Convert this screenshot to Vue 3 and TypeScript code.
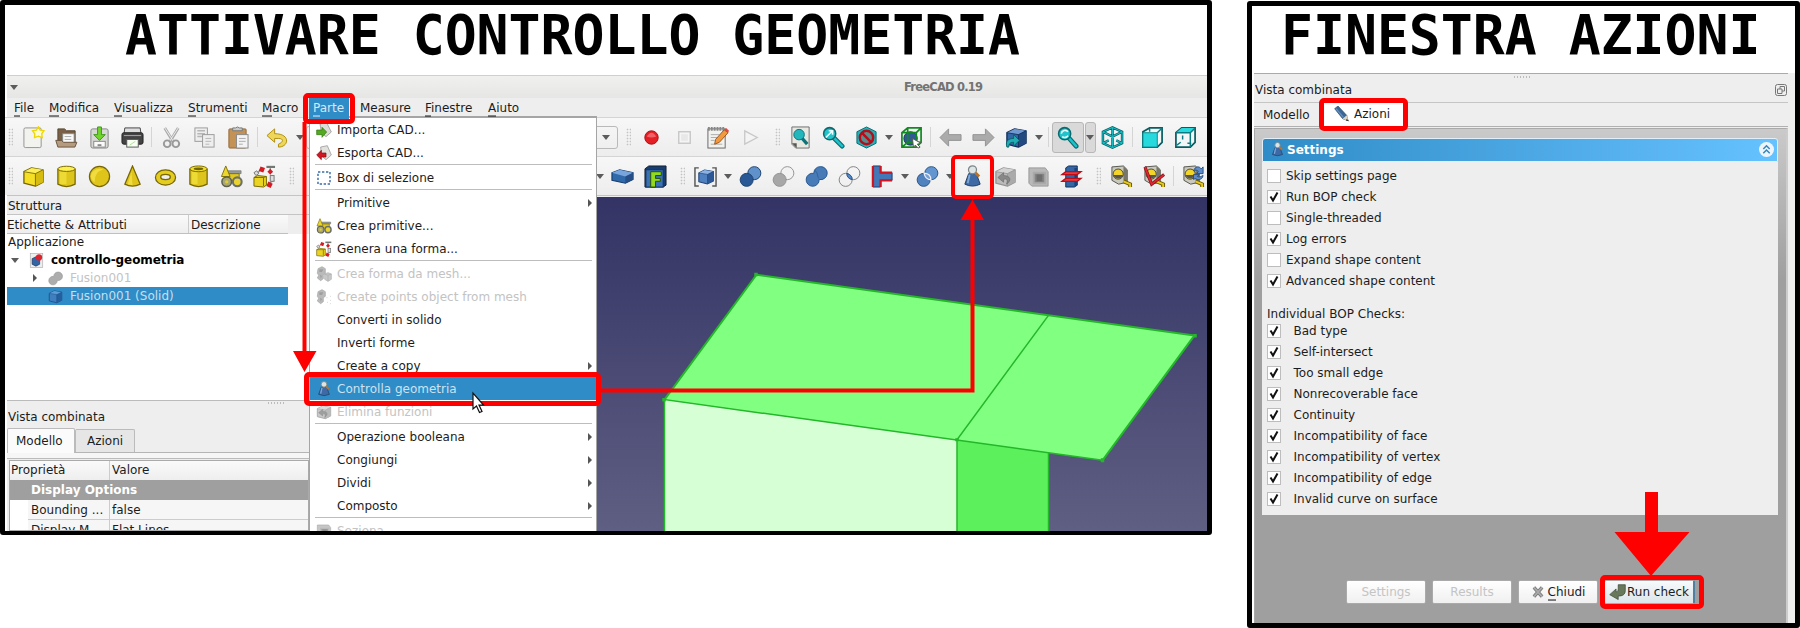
<script setup lang="ts">
type Tool = { k: string; i?: string }

const cube = (a: string, b: string, c: string, s: string) =>
  `<path d="M2 7 10 3 22 5v13l-8 4L2 19Z" fill="${a}" stroke="${s}" stroke-width="1.4" stroke-linejoin="round"/><path d="M2 7 10 3 22 5 14 9Z" fill="${b}"/><path d="M14 9 22 5v13l-8 4Z" fill="${c}"/><path d="M2 7 14 9 22 5M14 9v13" fill="none" stroke="${s}" stroke-width=".9"/>`
const spheres = (a: string, b: string, s: string) =>
  `<circle cx="16" cy="8.5" r="6.8" fill="${b}" stroke="${s}"/><circle cx="8" cy="15.5" r="6.8" fill="${a}" stroke="${s}"/>`
const lens = (x: number, y: number) =>
  `<path d="M${x + 4} ${y + 4} 21 21" stroke="#0b6a70" stroke-width="5" stroke-linecap="round"/><path d="M${x + 4} ${y + 4} 21 21" stroke="#18c4cb" stroke-width="2.6" stroke-linecap="round"/><circle cx="${x}" cy="${y}" r="6.3" fill="#22c3ca" stroke="#0b6a70" stroke-width="1.6"/>`
const tape = `<path d="M2 2 14 1l4 4v13l-9 2-7-4Z" fill="#c9c9bd" stroke="#55554d"/><path d="m14 1 4 4v13l-4-2Z" fill="#77776b"/><circle cx="8.500" cy="9.500" r="5.300" fill="#f3d52a" stroke="#444"/><path d="M3.500 10.500a5.300 5.300 0 0 0 10 0Z" fill="#555"/><path d="m14 17 7 3v3" fill="none" stroke="#6f5d00" stroke-width="4"/><path d="m14 17 7 3v3" fill="none" stroke="#e5cb20" stroke-width="2"/>`
const pawn = `<path d="M8 9h8l4 11q-8 4-16 0Z" fill="#3d6aa5" stroke="#1d3c67"/><path d="m9 10-2 9" stroke="#7ea5d6" stroke-width="2"/><path d="m15 8 4 4" stroke="#b8742b" stroke-width="3"/><circle cx="12" cy="5" r="4.2" fill="#dce4e4" stroke="#7d8588" stroke-width="1.3"/>`
const blob = `<path d="M16 1.7a6.8 6.8 0 1 1-1.2 13.4 6.8 6.8 0 1 1-5.6-6.4A6.8 6.8 0 0 1 16 1.7Z" `
const prims = `<path d="M8 6h14v3H8" fill="#969b96" stroke="#6d716d" stroke-width=".7"/><path d="M8 9h12v8H5z" fill="#dfc727" stroke="#827100"/><path d="M6 1 10.500 12h-9Z" fill="#ecd62d" stroke="#827100"/><circle cx="7" cy="17.500" r="5" fill="#aaa774" stroke="#5d604f" stroke-width="1.600"/><circle cx="7" cy="17.500" r="1.700" fill="#ded12f"/><circle cx="18" cy="17.500" r="4.600" fill="#e8d331" stroke="#6c7068" stroke-width="2.200"/>`
const builder = `<path d="m1 13 4-2 9 1v9l-3 2-10-1Z" fill="#ead321" stroke="#766700"/><path d="M1 13h10v9m0-9 3-1" fill="none" stroke="#766700"/><path d="M14 2h9" stroke="#737773" stroke-width="2.3"/><path d="M18 3v7M4 10l4-6m9 15 5-3" stroke="#888" stroke-width="1.3"/><rect x="7" y="2" width="5" height="5" fill="#d51a22" transform="rotate(20 9 4)"/><path d="m18 4 3 3-3 3-3-3Z" fill="#d51a22"/><rect x="18" y="11" width="4" height="6" fill="#ddd" stroke="#777"/><path d="m1 8 3-2 2 3-3 2Z" fill="#ddd" stroke="#777"/><rect x="15" y="18" width="5" height="5" fill="#d51a22" transform="rotate(25 17 20)"/>`

const icons: Record<string, string> = {
  new: `<rect x="2" y="2" width="18" height="20.500" rx="1.500" fill="#f2f2ee" stroke="#929292"/><path d="m17 1 2 3.300 4 .6-2.400 3.200.5 4-4-1.500-4 1.500.2-4L11 5l4-.7Z" fill="#fffbd0" stroke="#efd600" stroke-width="1.400"/>`,
  open: `<path d="M3 3h7l2 2h9v14H3Z" fill="#7a6047" stroke="#574330"/><path d="M8 8h12v10H8Z" fill="#fafafa" stroke="#888"/><path d="M10 11h7m-7 3h7" stroke="#aaa"/><path d="M.8 15h6l2 2h14l-2 5H3Z" fill="#b49c80" stroke="#6b543d"/>`,
  save: `<rect x="3" y="3" width="18" height="20" rx="2" fill="#d6d8d4" stroke="#858585"/><rect x="6" y="16" width="12" height="6" fill="#fafafa" stroke="#888"/><path d="M10 20h4" stroke="#888" stroke-width="2"/><path d="M10 1h4v8h4l-6 6-6-6h4Z" fill="#71d62b" stroke="#3a9611"/>`,
  print: `<path d="M4 2h16l1 7H3Z" fill="#dedede" stroke="#444"/><rect x="1" y="7" width="22" height="12" rx="2" fill="#444" stroke="#222"/><path d="M3 10h18" stroke="#aaa"/><rect x="6" y="14" width="12" height="8" fill="#f7fff2" stroke="#555"/><path d="m9 20 6-4" stroke="#a9df95"/>`,
  cut: `<path d="m5 2 9 15M19 2l-9 15" stroke="#aaa" stroke-width="3"/><path d="m5 2 9 14M19 2l-9 14" stroke="#eee"/><circle cx="7.500" cy="18.500" r="3.500" fill="none" stroke="#999" stroke-width="2"/><circle cx="16.500" cy="18.500" r="3.500" fill="none" stroke="#999" stroke-width="2"/>`,
  copy: `<rect x="2" y="2" width="13" height="14" fill="#eee" stroke="#9a9a9a"/><path d="M4.500 5h8m-8 3h8m-8 3h5" stroke="#b6b6b6" stroke-width="1.500"/><rect x="10" y="9" width="12" height="13" fill="#eee" stroke="#9a9a9a"/><path d="M13 13h6m-6 3h6m-6 3h4" stroke="#b6b6b6"/>`,
  paste: `<rect x="3" y="3" width="18" height="20" rx="1" fill="#c49254" stroke="#926935"/><path d="M7 5V2h3l2-1 2 1h3v3Z" fill="#c8cac8" stroke="#777"/><rect x="11" y="9" width="12" height="14" fill="#f3f3f3" stroke="#888"/><path d="M13.500 13h7m-7 3h7m-7 3h4" stroke="#aaa"/>`,
  undo: `<path d="m9 3-8 7 8 7v-4h4c6 0 5 4 0 6v3c11 0 13-14-4-14Z" fill="#eed65b" stroke="#ad8c09"/>`,
  box: cube('#f4df25', '#faed58', '#d6bc0e', '#776600'),
  cyl: `<path d="M3 4v16q9 5 18 0V4" fill="#dec51d" stroke="#776600" stroke-width="1.300"/><path d="M5 7h7v13H5Z" fill="#eeda34"/><ellipse cx="12" cy="4" rx="9" ry="2.700" fill="#fff052" stroke="#776600"/>`,
  sphere: `<circle cx="12" cy="12" r="10.500" fill="#dfc41a" stroke="#776600" stroke-width="1.300"/><path d="M3 12c0-7 9-10 13-7-7 1-9 7-9 13-2-1-4-3-4-6Z" fill="#f0dc40"/>`,
  cone: `<path d="M12 1 20 20q-8 4-16 0Z" fill="#dfc41a" stroke="#776600" stroke-width="1.300"/><path d="m11 7-4 13 5 1Z" fill="#f0dc40"/>`,
  torus: `<ellipse cx="12" cy="13" rx="10.500" ry="8" fill="#e5cd20" stroke="#776600" stroke-width="1.300"/><ellipse cx="12" cy="12.500" rx="5" ry="2.700" fill="#eee" stroke="#776600" stroke-width="1.400"/>`,
  tube: `<path d="M3 4v16q9 5 18 0V4" fill="#dec51d" stroke="#776600" stroke-width="1.300"/><path d="M5 7h6v13H5Z" fill="#eeda34"/><ellipse cx="12" cy="4" rx="9" ry="3" fill="#f4df25" stroke="#776600"/><ellipse cx="12" cy="4" rx="5" ry="1.500" fill="#716500"/>`,
  prims,
  builder,
  rec: `<circle cx="12" cy="12" r="7" fill="#e31e24" stroke="#b00d13"/><path d="M7 11q5-8 10 0-5 2-10 0" fill="#f06165"/>`,
  stop: `<rect x="6" y="6" width="12" height="12" fill="#f5f5f5" stroke="#c8c8c8" stroke-width="1.500"/><rect x="8.500" y="8.500" width="7" height="7" fill="#e8e8e8"/>`,
  edit: `<rect x="2" y="3" width="18" height="20" fill="#f1f1ed" stroke="#666"/><path d="M2 3h18" stroke="#888" stroke-width="4" stroke-dasharray="2 1"/><path d="M5 9h9m-9 3h7m-7 3h4m-4 4h12" stroke="#aaa"/><path d="m10 14 9-10 4 3-9 10-5 2Z" fill="#f39a3d" stroke="#995420"/><path d="m19 4 2-2 3 3-1 2Z" fill="#e04646"/>`,
  play: `<path d="M6 5 19 12 6 19Z" fill="#f4f4f4" stroke="#c8c8c8" stroke-width="1.400"/>`,
  fit: `<path d="M3 1h18v22H7l-4-4Z" fill="#e8e8e3" stroke="#6c6c6c"/><path d="M3 18h5v5Z" fill="#555"/><path d="m13 12 6 7" stroke="#0d7379" stroke-width="3.500"/><circle cx="10.500" cy="9" r="5.500" fill="#21b7bd" stroke="#0b7378"/>`,
  zoom: lens(8, 8) + `<path d="m4 12 7-7M7 5h4v4" fill="none" stroke="#e9ffff" stroke-width="1.700"/>`,
  nodraw: `<path d="M12 1 22 6v12l-10 5L2 18V6Z" fill="#1fb4bb" stroke="#0b6a70"/><circle cx="12" cy="12" r="7" fill="#5a8d90" stroke="#b70d18" stroke-width="2.600"/><path d="m7 7 10 10" stroke="#b70d18" stroke-width="2.600"/>`,
  bbox: `<circle cx="11" cy="13" r="7" fill="#315b94" stroke="#18345e"/><path d="M2 7 8 2h14v15l-5 5H2ZM2 7h15v15M17 7l5-5M8 2v15l-6 5M8 17h14" fill="none" stroke="#128a22" stroke-width="1.800"/><path d="m13 13 9 5-4 1 3 3-2 1-3-3-2 2Z" fill="#fff" stroke="#555"/>`,
  left: `<path d="M1 12 10 3v6h13v6H10v6Z" fill="#ababab" stroke="#929292"/>`,
  right: `<path d="M23 12 14 3v6H1v6h13v6Z" fill="#ababab" stroke="#929292"/>`,
  link: cube('#3465a4', '#7099d2', '#234981', '#122f59') + `<path d="M2 22C0 15 4 13 9 13V9l6 6-6 6v-4c-4 0-5 2-5 5Z" fill="#22acb4" stroke="#076269"/>`,
  sync: lens(9, 8) + `<path d="M5.500 8a4 4 0 0 1 7-2m0 4a4 4 0 0 1-6 1" fill="none" stroke="#e9ffff" stroke-width="1.700"/>`,
  iso: `<path d="M12 1.500 22 6v12l-10 4.500L2 18V6Zm0 0V10M2 6l10 5 10-5M12 11v11M2 18l6-3m14 3-6-3" fill="none" stroke="#075d63" stroke-width="2.600"/><path d="M12 1.500 22 6v12l-10 4.500L2 18V6Zm0 0V10M2 6l10 5 10-5M12 11v11M2 18l6-3m14 3-6-3" fill="none" stroke="#19b9c1" stroke-width="1.200"/>`,
  front: `<path d="M2 6 9 2h13v15l-5 5H2Z" fill="#f2f6f6" stroke="#075d63" stroke-width="1.800"/><path d="M2 7h15v15H2Z" fill="#27d8dd" stroke="#0a888c"/><path d="m17 7 5-5M9 3v3" stroke="#0a7b80" stroke-width="1.500"/>`,
  top: `<path d="M2 7 8 2h14v15l-5 5H2Z" fill="#f2f6f6" stroke="#075d63" stroke-width="1.800"/><path d="m2 7 6-5h14l-5 5Z" fill="#27d8dd"/><path d="M2 7h15v15M17 7l5-5M9 10v4m-6 6 4-3m7 1h4" fill="none" stroke="#0a7b80" stroke-width="1.500"/>`,
  extr: `<path d="M1 8 9 5l14 3v7l-8 4-14-3Z" fill="#316aaa" stroke="#163d6d" stroke-width="1.200"/><path d="m1 8 8-3 14 3-8 4Z" fill="#78a6dc"/><path d="m15 12 8-4v7l-8 4Z" fill="#264f87"/>`,
  f: `<path d="M1 4 5 1h18v20l-3 2H1Z" fill="#183d70" stroke="#14202e"/><rect x="2" y="5" width="18" height="18" fill="#3a72b5" stroke="#13325c"/><path d="M7 7h11v4h-6v3h5v3h-5v6H7Z" fill="#91da1e" stroke="#254c08"/>`,
  comp: `<path d="M5 3H1v19h4M19 3h4v19h-4" fill="none" stroke="#555" stroke-width="1.500"/><g transform="translate(3.500 3) scale(.76)">${cube('#4f80bf', '#8cb1e2', '#2d5898', '#1d4378')}</g>`,
  bool: spheres('#285896', '#5f91ca', '#1d426f'),
  minus: spheres('#a7a7a7', '#f2f2f2', '#929292'),
  fuse: blob + `fill="#477bb8" stroke="#24568f"/><path d="M10 5q3 2 4 9" fill="none" stroke="#315f99"/>`,
  inter: spheres('none', 'none', '#818181') + `<path d="M9.200 8.700q5.500 1.500 5.600 6.500-5.500-1-5.600-6.500Z" fill="#548ac7" stroke="#245393"/>`,
  join: `<path d="M2 1h8v7h12v8H10v7H2Z" fill="#4277b8" stroke="#193c6a"/><path d="M2 1v22m8-22v7h12M10 23v-7h12" fill="none" stroke="#d01420" stroke-width="2.400"/>`,
  split: spheres('#4f82bf', '#6396d0', '#285582') + `<path d="M8.500 8.500q7 .5 7 7-6-.5-7-7Z" fill="#759fcd" stroke="#eef" stroke-width="1.300"/>`,
  pawn,
  defeat: cube('#bcbcbc', '#d3d3d3', '#aaa', '#969696') + `<path d="m4 13 6-5v3c7 0 9 5 3 9 2-5 0-6-3-5v3Z" fill="#888" stroke="#666" stroke-width=".6"/>`,
  shell: `<path d="M2 3h17l3 4v15H5l-3-3Z" fill="#b9b9b9" stroke="#999"/><path d="M7 8h12v11H7Z" fill="#858585" stroke="#aaa" stroke-width="2"/><path d="M10 10h6v7h-6Z" fill="#6e6e6e"/>`,
  section: `<path d="m6 3 3-2h9v20l-3 2H6Z" fill="#3465a4" stroke="#122f59"/><path d="M15 3h3v18l-3 2Z" fill="#1c427a"/><path d="M2 10 6 7h16l-4 3ZM2 17l4-3h16l-4 3Z" fill="#e23a3f" stroke="#bd0e18" stroke-width="1.300"/>`,
  tape,
  angle: tape + `<path d="m2 2 7 18L22 10" fill="none" stroke="#8c1018" stroke-width="3.200"/><path d="m2 2 7 18L22 10" fill="none" stroke="#df2631" stroke-width="1.800"/>`,
  refresh: tape + `<path d="M12 6c2-5 6-5 8-2l2-2v7h-7l2-2c-1-2-3-2-5-1Zm10 5c-1 5-6 5-8 3l-2 1v-5h6l-2 2c2 1 4 0 6-1Z" fill="#5c8cc9" stroke="#294f83"/>`,
  imp: `<path d="M6 3 16 1l7 14-8 7-7-6Z" fill="#dcdcd8" stroke="#888"/><path d="M1 12h8V8l7 7-7 8v-4H1Z" fill="#54a822" stroke="#2d720e"/>`,
  exp: `<path d="M7 3 17 1l6 14-8 7-7-6Z" fill="#e1e1dd" stroke="#888"/><path d="M15 12H8V8l-7 7 7 7v-4h7Z" fill="#cf1822" stroke="#8b0710"/>`,
  sel: `<rect x="3" y="3" width="18" height="18" fill="none" stroke="#3a6da8" stroke-width="2.200" stroke-dasharray="3.500 2.500"/>`,
  mesh: `<path d="M3 4 9 1l5 3v7l-3 2v6l-4 3-5-4 2-4-2-3Z" fill="#aaa" stroke="#909090"/><path d="M5 5h6l-2 4H5Zm1 8 3 2-2 4" fill="#888"/><path d="m13 12 5-2 5 2v8l-5 3-5-3Z" fill="#bcbcbc" stroke="#999"/><path d="m13 12 5 2 5-2m-5 2v9" fill="none" stroke="#999"/>`,
  points: `<path d="M3 4 9 1l5 3v7l-3 2v6l-4 3-5-4 2-4-2-3Z" fill="#aaa" stroke="#909090"/><path d="M5 5h6l-2 4H5Zm1 8 3 2-2 4" fill="#888"/><path d="M16 13h1m4-2h1m-1 6h1m-5 3h1m3 2h1" stroke="#bbb" stroke-width="1.500"/>`,
  doc: `<rect x="2" y="1" width="20" height="22" fill="#eee" stroke="#aaa"/><path d="M5 9 11 6l6 3v9l-6 3-6-3Z" fill="#3465a4" stroke="#152f55"/><circle cx="16" cy="7" r="5" fill="#dc242c"/>`,
  greyfuse: blob + `fill="#adadad" stroke="#999"/>`,
  solid: cube('#3f7fc0', '#5b9bd8', '#245f9f', '#1d5188'),
  pencil: `<path d="m1 4 5-4 13 14 2 8-8-3Z" fill="#3b6796" stroke="#29496e"/><path d="m3 4 11 13" stroke="#6990bb" stroke-width="2"/><path d="m13 19 6-5 3 9Z" fill="#ddd6c4"/><path d="m19 19 4 4-5-1Z" fill="#333"/>`,
  x: `<path d="m5 4 14 16M19 4 5 20" stroke="#777" stroke-width="6"/><path d="m5 4 14 16M19 4 5 20" stroke="#aaa" stroke-width="3"/>`,
  enter: `<path d="M13 1h10v8c0 6-4 8-10 8v5L1 15l9-8v4c2 0 3-1 3-4Z" fill="#68785a" stroke="#3c4936"/>`,
}

const parse = (s: string): Tool[] =>
  s.split(' ').map((t) => (icons[t] ? { k: 'icon', i: t } : { k: t }))

const bar1 = parse('handle new open save print sep cut copy paste sep undo arrow combo handle rec stop edit play handle fit zoom nodraw arrow bbox sep left right link arrow sep pressed iso sep front top')
const bar2 = parse('handle box cyl sphere cone torus tube prims builder handle gap arrow extr f handle comp arrow bool minus fuse inter join arrow split arrow pawn defeat shell section handle tape angle sep refresh')

const menubar = [
  { t: 'File', w: 35 }, { t: 'Modifica', w: 65 }, { t: 'Visualizza', w: 74 }, { t: 'Strumenti', w: 74 },
  { t: 'Macro', w: 52 }, { t: 'Parte', w: 46 }, { t: 'Measure', w: 65, plain: true }, { t: 'Finestre', w: 63 }, { t: 'Aiuto', w: 50 },
]

type Item = { t?: string; i?: string; sub?: boolean; off?: boolean; on?: boolean }
const menu: Item[] = [
  { t: 'Importa CAD...', i: 'imp' }, { t: 'Esporta CAD...', i: 'exp' }, {},
  { t: 'Box di selezione', i: 'sel' }, {},
  { t: 'Primitive', sub: true }, { t: 'Crea primitive...', i: 'prims' }, { t: 'Genera una forma...', i: 'builder' }, {},
  { t: 'Crea forma da mesh...', i: 'mesh', off: true }, { t: 'Create points object from mesh', i: 'points', off: true },
  { t: 'Converti in solido' }, { t: 'Inverti forme' }, { t: 'Create a copy', sub: true },
  { t: 'Controlla geometria', i: 'pawn', on: true }, { t: 'Elimina funzioni', i: 'defeat', off: true }, {},
  { t: 'Operazione booleana', sub: true }, { t: 'Congiungi', sub: true }, { t: 'Dividi', sub: true }, { t: 'Composto', sub: true }, {},
  { t: 'Seziona', i: 'shell', off: true },
]

const options = [
  { t: 'Skip settings page', c: false }, { t: 'Run BOP check', c: true }, { t: 'Single-threaded', c: false },
  { t: 'Log errors', c: true }, { t: 'Expand shape content', c: false }, { t: 'Advanced shape content', c: true },
]
const checks = ['Bad type', 'Self-intersect', 'Too small edge', 'Nonrecoverable face', 'Continuity', 'Incompatibility of face', 'Incompatibility of vertex', 'Incompatibility of edge', 'Invalid curve on surface']
</script>

<template>
  <main class="page">
    <section class="panel main">
      <h1><span>ATTIVARE CONTROLLO GEOMETRIA</span></h1>
      <div class="window">
        <div class="titlebar"><i class="tri down" /><b>FreeCAD 0.19</b></div>
        <nav class="menubar">
          <span v-for="m in menubar" :key="m.t" :class="{ active: m.t === 'Parte' }" :style="{ width: m.w + 'px' }">
            <em><u v-if="!m.plain">{{ m.t[0] }}</u>{{ m.plain ? m.t : m.t.slice(1) }}</em>
          </span>
        </nav>
        <div v-for="(bar, n) in [bar1, bar2]" :key="n" class="toolbar">
          <template v-for="(b, j) in bar" :key="j">
            <span v-if="b.k === 'pressed'" class="split"><span><svg viewBox="0 0 24 24" v-html="icons.sync" /></span><span><i class="tri down" /></span></span>
            <span v-else :class="b.k">
              <svg v-if="b.i" viewBox="0 0 24 24" v-html="icons[b.i]" />
              <i v-else-if="b.k === 'arrow' || b.k === 'combo'" class="tri down" />
            </span>
          </template>
        </div>
        <div class="body">
          <aside>
            <div class="docktitle"><em>Struttura</em></div>
            <div class="treehead"><span><em>Etichette &amp; Attributi</em></span><span><em>Descrizione</em></span></div>
            <div class="tree">
              <div class="app"><em>Applicazione</em></div>
              <div class="node"><i class="tri down" /><svg viewBox="0 0 24 24" v-html="icons.doc" /><b>controllo-geometria</b></div>
              <div class="node child dim"><i class="tri next" /><svg viewBox="0 0 24 24" v-html="icons.greyfuse" /><em>Fusion001</em></div>
              <div class="node child chosen"><i class="tri none" /><svg viewBox="0 0 24 24" v-html="icons.solid" /><em>Fusion001 (Solid)</em></div>
            </div>
            <div class="combi"><i class="grip" /><em>Vista combinata</em></div>
            <div class="tabs"><span class="cur"><em>Modello</em></span><span><em>Azioni</em></span></div>
            <div class="splitrow"><i class="grip" /></div>
            <div class="props">
              <div class="ph"><span><em>Proprietà</em></span><span><em>Valore</em></span></div>
              <div class="pg"><b>Display Options</b></div>
              <div class="pr"><i /><span><em>Bounding ...</em></span><span><em>false</em></span></div>
              <div class="pr"><i /><span><em>Display M...</em></span><span><em>Flat Lines</em></span></div>
            </div>
          </aside>
          <svg class="view" viewBox="309 197 898 334" preserveAspectRatio="none">
            <defs><linearGradient id="sky" x1="0" y1="0" x2="0" y2="1"><stop offset="0" stop-color="#333365" /><stop offset="1" stop-color="#5f5f83" /></linearGradient></defs>
            <rect x="309" y="197" width="898" height="334" fill="url(#sky)" />
            <path d="M664 399 957 439V532H664Z" fill="#d6ffd6" />
            <path d="M957 439 1048.500 452V532H957Z" fill="#5cf15c" />
            <path d="M756.500 274.500 1194.500 335 1102.500 459.500 664.500 399Z" fill="#80ff80" />
            <g fill="none" stroke="#24b72a" stroke-width="1.500"><path d="M664.500 532V399L1102.500 459.500M1048.500 452V532M957 532V439L1048.500 315" /><path d="M664.500 399 756.500 274.500 1194.500 335 1102.500 459.500" stroke-width="2" /></g>
            <path d="M756 272.500v3.500M664 397.500v3.500M1195 333.500v3.500M1102.500 457.500v4M957 437.500v3" stroke="#24b72a" stroke-width="3.500" />
          </svg>
        </div>
      </div>
      <div class="popup">
        <template v-for="(m, j) in menu" :key="j">
          <hr v-if="!m.t" />
          <div v-else class="item" :class="{ off: m.off, on: m.on }">
            <span class="ic"><svg v-if="m.i" viewBox="0 0 24 24" v-html="icons[m.i]" /></span><em>{{ m.t }}</em><i v-if="m.sub" class="tri next" />
          </div>
        </template>
      </div>
      <div class="frame parte" /><div class="frame controlla" /><div class="frame tool" />
      <svg class="marks" viewBox="0 0 1212 535">
        <path d="M304.500 122V354M600 390.500H972.500V218" fill="none" stroke="red" stroke-width="4" />
        <path d="M293 351h23.500L304.500 372ZM960.500 220h23.500L972.500 199.500Z" fill="red" />
        <path d="M473 393v16l3.500-3 3 6.500 2.500-1-3-6.500h4.500Z" fill="#fff" stroke="#111" stroke-width="1.200" />
      </svg>
    </section>

    <section class="panel actions">
      <h1><span>FINESTRA AZIONI</span></h1>
      <div class="dock">
        <div class="dtop"><i class="grip" /><em>Vista combinata</em>
          <svg viewBox="0 0 12 12"><rect x=".5" y=".5" width="11" height="11" rx="2" fill="none" stroke="#777" /><path d="M5 5V2.500h4.500V7H7M2.500 5H7v4.500H2.500Z" fill="none" stroke="#777" /></svg>
        </div>
        <div class="dtabs"><span><em>Modello</em></span><span class="cur"><svg viewBox="0 0 24 24" v-html="icons.pencil" /><em>Azioni</em></span></div>
        <div class="task">
          <div class="thead"><svg viewBox="0 0 24 24" v-html="icons.pawn" /><b>Settings</b>
            <svg class="fold" viewBox="0 0 14 14"><circle cx="7" cy="7" r="7" fill="#eef5fa" /><path d="m4 6.500 3-3 3 3m-6 4 3-3 3 3" fill="none" stroke="#3486bd" stroke-width="1.400" /></svg>
          </div>
          <div class="tbody">
            <div v-for="o in options" :key="o.t" class="row"><i class="cb"><svg v-if="o.c" viewBox="0 0 14 14"><path d="m3.500 6.500 2.500 4 4.500-8" /></svg></i><em>{{ o.t }}</em></div>
            <div class="label"><em>Individual BOP Checks:</em></div>
            <div v-for="c in checks" :key="c" class="row far"><i class="cb"><svg viewBox="0 0 14 14"><path d="m3.500 6.500 2.500 4 4.500-8" /></svg></i><em>{{ c }}</em></div>
          </div>
          <div class="buttons">
            <button class="off"><em>Settings</em></button><button class="off"><em>Results</em></button>
            <button><svg viewBox="0 0 24 24" v-html="icons.x" /><em><u>C</u>hiudi</em></button>
            <button class="run"><svg viewBox="0 0 24 24" v-html="icons.enter" /><em>Run check</em></button>
          </div>
        </div>
      </div>
      <div class="frame azioni" /><div class="frame check" />
      <svg class="marks" viewBox="0 0 553 627"><path d="M398 491h13v40h31.500L404 575 367.500 531H398Z" fill="red" /></svg>
    </section>
  </main>
</template>

<style>
html, body { margin: 0; background: #fff; overflow: hidden; }
</style>

<style scoped>
* { box-sizing: border-box; }
.page { display: flex; align-items: flex-start; gap: 35px; width: 1800px; height: 628px; font: 12px/14px "DejaVu Sans", sans-serif; color: #1c1c1c; background: #fff; }
em, b { font-style: normal; display: inline-block; white-space: pre; transform: scaleY(1.07); }
u { text-decoration: none; border-bottom: 1px solid currentColor; }
svg { display: block; flex: none; }
.panel { position: relative; flex: none; border: 5px solid #000; border-radius: 3px; background: #fff; overflow: hidden; }
.main { width: 1212px; height: 535px; border-bottom-width: 4px; padding-left: 2px; }
.actions { width: 553px; height: 627px; margin-top: 1px; padding-left: 2px; }
h1 { margin: 0; height: 70px; font: bold 53.1px/61px "DejaVu Sans Mono", monospace; color: #000; white-space: pre; }
h1 span { display: inline-block; transform: scaleY(1.035); transform-origin: 0 50%; }
.main h1 { padding-left: 118px; }
.actions h1 { height: 67px; padding-left: 27px; line-height: 59px; }
.window { height: 456px; background: #eee; display: flex; flex-direction: column; }
.tri { width: 0; height: 0; flex: none; }
.tri.down { border: 4px solid transparent; border-top: 5px solid #5c5c5c; border-bottom: 0; }
.tri.next { border: 4px solid transparent; border-left: 4px solid #555; border-right: 0; }
.titlebar { flex: none; height: 23px; display: flex; align-items: center; border-top: 1px solid #cfcfcf; background: linear-gradient(#f0f0ef, #e6e6e4); padding-left: 3px; }
.titlebar b { margin-left: 886px; color: #737373; font-size: 11.500px; letter-spacing: -.78px; }
.menubar { flex: none; height: 19px; display: flex; padding-left: 2px; background: #eee; }
.menubar span { flex: none; height: 21px; padding: 3px 0 0 5px; position: relative; z-index: 1; }
.menubar .active { background: linear-gradient(#308cc6, #308cc6) 0 0 / 40px 100% no-repeat; color: #d5e8f5; padding-left: 4px; }
.toolbar { flex: none; height: 39px; display: flex; border-top: 1px solid #d4d4d4; background: linear-gradient(#f7f7f7, #ededed); margin-left: -7px; padding-left: 7px; overflow: hidden; }
.toolbar > span { flex: none; display: flex; align-items: center; justify-content: center; }
.toolbar > .icon { width: 33px; }
.toolbar svg { width: 23px; height: 23px; }
.toolbar > .sep { width: 6.500px; }
.sep::before { content: ""; width: 1px; height: 20px; background: #d5d5d5; }
.toolbar > .arrow { width: 12px; }
.handle { width: 17px; padding-left: 5px; }
.toolbar > .handle:first-child { margin-left: -8px; width: 17.500px; }
.handle::before { content: ""; width: 5px; height: 18px; background: radial-gradient(circle, #c4c4c4 40%, transparent 50%) 0 0 / 3px 3px; }
.toolbar > .combo { width: 312px; padding-right: 7px; justify-content: flex-end; height: 23px; margin-top: 8px; border: 1px solid #b9b9b9; border-radius: 3px; }
.toolbar > .gap { width: 296px; }
.toolbar > .split { width: 44.500px; gap: 1px; justify-content: flex-start; }
.split > span { height: 31px; width: 32px; display: flex; align-items: center; justify-content: center; background: #d9d9d9; border: 1px solid #b7b7b7; border-radius: 3px; }
.split > span + span { width: 11px; }
.body { flex: 1; display: flex; min-height: 0; border-top: 1px solid #c4c4c4; }
aside { width: 302px; flex: none; display: flex; flex-direction: column; }
.view { width: 898px; height: 335px; margin-top: 1px; background: #333365; }
.docktitle { height: 19px; padding: 3px 0 0 1px; border-bottom: 1px solid #c4c4c4; }
.treehead { display: flex; width: 281px; height: 19px; background: linear-gradient(#fafafa, #eee); border-bottom: 1px solid #c0c0c0; }
.treehead span { padding: 3px 0 0 0; width: 181px; }
.treehead span + span { width: 100px; border-left: 1px solid #ccc; padding-left: 2px; }
.tree { height: 167px; background: #fff; border-bottom: 1px solid #bbb; }
.app { height: 17px; padding: 1px 0 0 1px; }
.node { height: 18px; width: 281px; display: flex; align-items: center; padding-left: 4px; }
.node svg { width: 15px; height: 15px; margin: 0 7px 0 10px; }
.node b { color: #000; letter-spacing: -.07px; }
.child { padding-left: 26px; }
.child svg { margin: 0 7px 0 11px; }
.dim { color: #c3c3c3; }
.chosen { background: #308cc6; color: #c6dfef; }
.tri.none { width: 4px; }
.grip { width: 17px; height: 2px; background: radial-gradient(circle, #bbb 35%, transparent 50%) 0 0 / 3px 2px; }
.combi { height: 27px; padding: 1px 0 0 1px; display: flex; flex-direction: column; gap: 6px; }
.combi em { align-self: flex-start; }
.combi .grip, .splitrow .grip { margin-left: 259px; flex: none; }
.tabs { height: 25px; display: flex; align-items: flex-end; border-bottom: 1px solid #b5b5b5; }
.tabs span { height: 23px; width: 60px; border: 1px solid #bbb; border-bottom: 0; background: #e6e6e6; padding: 4px 0 0 11px; border-radius: 2px 2px 0 0; }
.tabs .cur { height: 25px; width: 68px; background: #fbfbfb; padding: 5px 0 0 8px; margin-bottom: -1px; }
.splitrow { height: 6px; padding-top: 2px; background: #f6f6f6; border-bottom: 1px solid #bbb; }
.props { margin: 1px 0 0 2px; border: 1px solid #aaa; background: #fff; flex: 1; overflow: hidden; }
.ph { display: flex; height: 19px; background: linear-gradient(#fafafa, #eee); }
.ph span { width: 99px; padding: 2px 0 0 1px; }
.ph span + span { border-left: 1px solid #ccc; padding-left: 2px; }
.pg { height: 20px; background: #9f9f9f; color: #fff; padding: 3px 0 0 21px; }
.pr { display: flex; height: 19.500px; background: #f6f6f6; }
.pr i { width: 18px; flex: none; background: #fff; }
.pr span { width: 81px; flex: none; padding: 3px 0 0 3px; border-bottom: 1px solid #ccc; white-space: nowrap; }
.pr span + span { width: 210px; border-left: 1px solid #ccc; padding-left: 2px; }
.popup { position: absolute; left: 304px; top: 111px; width: 288px; height: 421px; background: #fff; border: 1px solid #a5a5a5; border-top-width: 2px; overflow: hidden; }
.popup hr { margin: 0 4px 0 5px; height: 2px; border: 0; border-top: 1px solid #bdbdbd; }
.item { height: 23px; display: flex; align-items: center; padding: 0 4px 0 6px; }
.item .ic { width: 21px; }
.item svg { width: 16px; height: 16px; }
.item .tri { margin-left: auto; }
.item.off { color: #c3c3c3; }
.item.off svg { opacity: .8; }
.item.on { background: #308cc6; color: #cce2f1; }
.frame { position: absolute; border: 5px solid red; border-radius: 5px; z-index: 2; }
.parte { left: 298px; top: 88px; width: 52px; height: 31px; }
.controlla { left: 299px; top: 367px; width: 297px; height: 34px; }
.tool { left: 946px; top: 150px; width: 43px; height: 44px; border-width: 4px; }
.marks { position: absolute; left: -5px; top: -5px; z-index: 3; }
.main .marks { width: 1212px; height: 535px; }
.actions .marks { width: 553px; height: 627px; }
.dock { background: #eee; height: 550px; display: flex; flex-direction: column; }
.dtop { height: 29px; margin-right: 7px; border-top: 1px solid #aaa; display: flex; align-items: center; padding: 3px 1px 0 1px; position: relative; justify-content: space-between; }
.dtop .grip { position: absolute; left: 259px; top: 2px; }
.dtop svg { width: 12px; height: 12px; }
.dtabs { height: 25px; display: flex; margin-right: 7px; border-top: 1px solid #c5c5c5; border-bottom: 1px solid #b0b0b0; }
.dtabs span { width: 69px; padding: 5px 0 0 9px; }
.dtabs .cur { width: 80px; background: #fff; padding: 4px 0 0 10px; display: flex; align-items: flex-start; gap: 4px; margin-left: 1px; }
.dtabs svg { width: 16px; height: 16px; margin-top: -1px; }
.task { margin: 1px 7px 0 0; flex: 1; border: 1px solid #aaa; border-bottom: 0; border-right: 2px solid #ccc; background: linear-gradient(#cacaca, #9f9f9f 150px); padding: 9px 8px 0 7px; }
.thead { height: 24px; display: flex; align-items: center; gap: 2px; padding: 0 3px 1px 7px; background: linear-gradient(90deg, #308cc6, #66c1ff); color: #fff; border-radius: 3px 3px 0 0; border: 1px solid #e2eff8; }
.thead svg { width: 15px; height: 17px; }
.thead .fold { width: 15px; height: 15px; margin-left: auto; }
.tbody { height: 353px; background: #eee; padding: 3.500px 0 0 5px; }
.row { height: 21px; display: flex; align-items: center; gap: 5px; }
.far { gap: 12.500px; }
.cb { width: 14px; height: 14px; border: 1px solid #bdbdbd; background: #fff; display: block; flex: none; }
.cb svg { width: 14px; height: 14px; margin: -1px; }
.cb path { fill: none; stroke: #111; stroke-width: 2; }
.label { height: 29px; padding-top: 15px; }
.buttons { display: flex; gap: 6px; padding: 65px 0 0 84px; }
button { width: 80px; height: 24px; border: 1px solid #aaa; border-radius: 2px; background: linear-gradient(#fff, #f0f0f0); font: inherit; color: inherit; padding: 0; display: flex; align-items: center; justify-content: center; gap: 3px; }
button svg { width: 14px; height: 14px; }
.buttons .off { color: #c4c4c4; }
.buttons .run { width: 91px; background: linear-gradient(#f7fafb, #dbe5e9); border-right: 2px solid #507f9f; gap: 1px; }
.buttons .run svg { width: 17px; height: 17px; }
.azioni { left: 67px; top: 92px; width: 89px; height: 33px; }
.check { left: 348px; top: 569px; width: 104px; height: 34px; }
</style>
